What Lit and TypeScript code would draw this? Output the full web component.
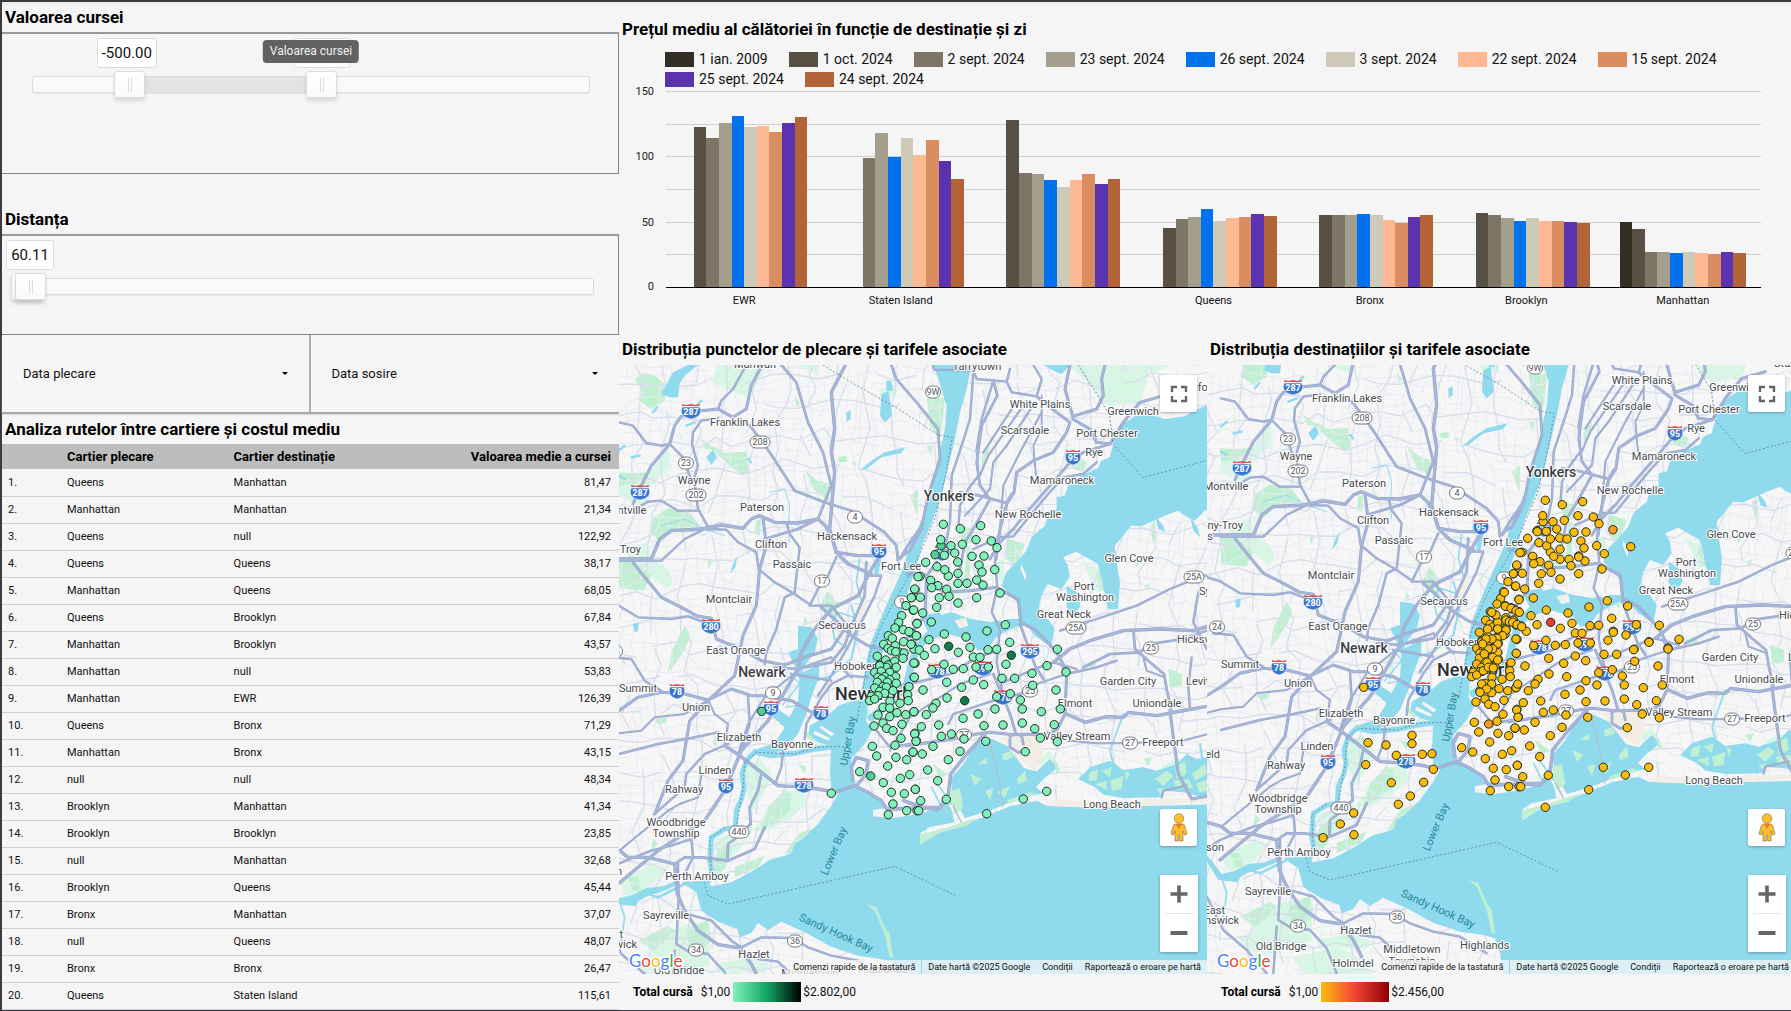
import { LitElement, html, svg, css } from "lit";
import { customElement, property } from "lit/decorators.js";

/* ---------- table and chart data ---------- */

const ROUTES: [string, string, string][] = [
  ["Queens", "Manhattan", "81,47"],
  ["Manhattan", "Manhattan", "21,34"],
  ["Queens", "null", "122,92"],
  ["Queens", "Queens", "38,17"],
  ["Manhattan", "Queens", "68,05"],
  ["Queens", "Brooklyn", "67,84"],
  ["Manhattan", "Brooklyn", "43,57"],
  ["Manhattan", "null", "53,83"],
  ["Manhattan", "EWR", "126,39"],
  ["Queens", "Bronx", "71,29"],
  ["Manhattan", "Bronx", "43,15"],
  ["null", "null", "48,34"],
  ["Brooklyn", "Manhattan", "41,34"],
  ["Brooklyn", "Brooklyn", "23,85"],
  ["null", "Manhattan", "32,68"],
  ["Brooklyn", "Queens", "45,44"],
  ["Bronx", "Manhattan", "37,07"],
  ["null", "Queens", "48,07"],
  ["Bronx", "Bronx", "26,47"],
  ["Queens", "Staten Island", "115,61"],
];

const SERIES: [string, string][] = [
  ["1 ian. 2009", "#322e24"],
  ["1 oct. 2024", "#575043"],
  ["2 sept. 2024", "#7d7667"],
  ["23 sept. 2024", "#a49e8c"],
  ["26 sept. 2024", "#0072f0"],
  ["3 sept. 2024", "#cfc9b7"],
  ["22 sept. 2024", "#ffb992"],
  ["15 sept. 2024", "#d98d61"],
  ["25 sept. 2024", "#5c33ae"],
  ["24 sept. 2024", "#b26438"],
];

const GROUPS: [string, number[]][] = [
  ["EWR", [0, 122.7, 114.3, 125.8, 131.1, 122.7, 123.5, 118.9, 125.8, 130.4]],
  ["Staten Island", [0, 0, 99, 118.1, 99.7, 114.3, 101.3, 112.8, 96.7, 82.9]],
  ["", [0, 128.1, 87.5, 86.7, 82.1, 76.8, 82.1, 86.7, 79.1, 82.9]],
  ["Queens", [0, 45.4, 52.3, 53.8, 59.9, 50.2, 53.1, 53.8, 56.1, 54.6]],
  ["Bronx", [0, 55.4, 55.4, 55.4, 56.1, 55.4, 51.5, 49.2, 53.8, 55.4]],
  ["Brooklyn", [0, 56.9, 55.4, 53.1, 50.8, 53.1, 50.8, 50.8, 50, 49.2]],
  ["Manhattan", [50, 44.6, 27, 27, 26.3, 27, 26.3, 25.5, 27, 26.3]],
];

/* ---------- map data: every sheet has an origin, in thirds of a pixel ---------- */

type Sheet = [number, number];
const NW: Sheet = [0, 0];
const NE: Sheet = [876, 0];
const SW: Sheet = [0, 1005];
const SE: Sheet = [876, 1005];
const XW: Sheet = [-45, 1077];
const XN: Sheet = [813, 72];
const XS: Sheet = [813, 1077];

const WATER: [Sheet, string][] = [
  [NW, "M190,1660 235,1690 250,1745 300,1778 358,1800 365,1825 400,1812 420,1782 450,1803 490,1778 560,1810 640,1853 720,1880 790,1890 825,1900 840,1945 850,2010 1830,2010 1830,1425 1616,1430 1416,1435 1326,1432 1286,1430 1256,1415 1176,1432 1106,1460 1026,1490 956,1515 906,1547 908,1512 936,1494 1010,1480 1000,1440 985,1420 966,1435 906,1455 820,1468 765,1462 765,1443 800,1438 775,1405 720,1372 700,1345 700,1290 740,1245 762,1205 745,1175 750,1120 735,1110 690,1120 662,1130 640,1150 610,1170 575,1190 572,1215 600,1240 640,1250 636,1330 640,1380 665,1385 640,1430 600,1485 560,1525 530,1545 520,1572 500,1580 460,1590 400,1628 340,1660 280,1672 260,1655Z"],
  [NW, "M946,108 961,150 986,230 981,300 961,390 941,470 916,560 876,650 850,730 800,840 755,950 738,1040 725,1125 748,1125 765,1050 790,980 850,850 886,740 916,640 946,570 971,500 991,410 1011,330 1026,250 1046,180 1060,108Z"],
  [NW, "M1830,225 1776,225 1740,240 1700,262 1640,270 1590,255 1550,262 1515,285 1490,330 1475,385 1450,395 1440,418 1390,440 1350,470 1340,500 1316,505 1316,540 1290,560 1280,590 1240,625 1225,665 1190,705 1165,730 1150,770 1180,800 1205,830 1205,870 1150,870 1120,880 1060,870 1000,850 960,860 930,900 920,940 990,915 1060,935 1080,965 1110,960 1130,930 1150,915 1200,890 1230,890 1250,920 1300,955 1310,900 1290,870 1262,840 1270,800 1290,765 1330,780 1355,745 1350,710 1335,685 1375,668 1440,705 1450,745 1470,840 1500,840 1506,760 1496,700 1490,650 1540,590 1570,592 1640,560 1680,545 1700,560 1730,575 1760,545 1830,530Z"],
  [NE, "M470,770 500,790 512,830 490,860 470,835Z M735,560 760,590 765,610 745,600Z M840,560 865,600 870,625 850,605Z M30,860 90,850 110,900 60,920Z"],
  [SE, "M190,250 240,222 290,245 340,312 380,322 420,285 442,312 400,345 378,370 400,388 330,402 240,440 165,462 128,400 122,345 160,300Z"],
  [SE, "M505,345 540,310 600,290 640,318 700,310 740,320 800,300 830,270 860,285 950,270 950,385 870,398 820,385 760,380 750,400 640,402 580,392 555,370Z"],
  [SW, "M545,30 605,0 603,40 580,100 565,150 540,210 500,255 470,268 415,268 418,255 470,238 500,190 455,150 470,130 515,160 540,110Z"],
  [NW, "M540,890 580,895 600,930 590,970 560,1010 545,1050 530,1010 510,970 540,960Z M130,195 165,130 210,108 240,108 200,140 185,165 180,205 155,205Z M790,195 812,185 822,260 800,280 786,260Z M265,385 285,362 297,385 280,408Z M805,155 820,155 825,185 805,185Z M685,250 698,243 698,270 686,280Z M725,425 760,395 800,370 862,355 850,372 790,385 745,420Z M345,705 358,682 352,715 335,735Z M775,690 790,690 780,740 768,735Z M45,885 62,880 60,905 50,910Z"],
  [NE, "M400,108 480,108 455,135 430,125Z M455,500 475,500 465,520Z"],
  [XW, "M90,620 130,600 180,595 215,580 222,592 180,610 110,632 98,655 40,648 10,600 0,580 8,575 50,630Z"],
];

const RIVERS: [Sheet, string, number][] = [
  [SW, "M415,265 460,275 530,268 590,255 645,248", 16],
  [SW, "M412,262 385,290 372,330 378,370 372,400 355,440 352,490 320,495 280,520 275,590 283,630 265,662", 15],
  [NW, "M930,920 895,960 880,1010 865,1070 820,1120 760,1165", 22],
  [NW, "M725,690 715,760 735,830 725,870 660,850 640,880 650,930 690,960", 5],
  [NW, "M700,830 720,900 700,990 640,1040 580,1060", 6],
  [NW, "M455,490 500,480 515,530 510,600 515,640", 3],
  [SW, "M210,655 120,700 90,690 40,720 5,715", 7],
  [SW, "M5,715 20,760 10,830", 5],
  [SE, "M640,150 625,190 600,260 610,300", 5],
  [SE, "M350,345 400,330 440,300 M880,300 870,240", 6],
  [SE, "M100,440 65,370 M125,420 75,350", 5],
  [NE, "M165,540 180,560 M560,540 510,600", 3],
  [NW, "M130,590 200,570 260,600 320,620", 3],
  [SW, "M515,25 545,60 480,140 M560,120 500,130", 4],
  [NW, "M3,365 20,350 M40,385 65,380 M105,250 118,235 M230,235 250,215 M205,290 230,280 M390,390 400,400 M3,440 20,450", 7],
];

const ISLANDS = "M1010,875 1045,870 1050,890 1025,898Z M1130,870 1165,865 1170,885Z M1210,705 1225,740 1222,755 1208,720Z M650,1215 610,1190 605,1196 640,1222Z M590,1205 636,1228 632,1235 585,1215Z M460,1110 520,1145 512,1160 452,1122Z";

const PARKS: [Sheet, string][] = [
  [NW, "M50,150 75,132 110,138 146,172 140,215 100,240 82,228 60,212 75,190Z M100,570 150,538 215,552 245,590 215,605 160,610 130,640 95,610Z M3,692 55,705 100,740 78,785 3,778Z M270,348 300,358 320,372 385,368 390,430 372,440 330,405Z M560,422 598,455 635,465 632,515 590,485Z M160,970 200,890 218,920 200,960 175,1000 150,1030Z M628,785 660,825 655,870 605,835Z M660,385 685,380 688,398 662,400Z M250,330 270,340 285,362 262,360Z M700,400 715,400 712,415Z M270,690 285,695 270,720Z M530,205 545,220 538,235Z M415,575 430,570 425,620 410,615Z M0,430 45,432 100,430 60,460 3,470Z M560,860 570,880 555,885Z"],
  [NE, "M50,205 105,208 98,280 88,330 60,290Z M150,592 185,598 190,640 155,650Z M290,628 345,645 320,712 282,685Z M170,650 185,655 178,760 162,760Z M470,395 500,380 530,400 520,430 490,420Z M90,108 120,108 115,118Z M560,720 590,745 590,790 568,780Z M720,590 735,580 740,620 728,640Z M670,690 690,700 680,715Z M0,500 25,480 22,560Z M300,890 330,880 320,910Z M215,380 240,350 235,390 215,420Z M50,350 70,350 62,380Z M510,1010 560,990 555,1015Z M700,770 720,762 715,785Z"],
  [SW, "M380,320 395,340 378,345Z M450,430 500,378 520,395 515,440 470,480 430,495Z M300,560 330,540 340,560 322,612 292,640 280,610Z M500,570 540,510 590,490 600,492 545,560Z M350,610 400,590 440,575 420,610 350,640Z M210,800 270,765 280,830 245,858 210,850Z M60,830 150,785 170,800 110,860Z M30,640 60,640 70,680 45,680Z M110,165 150,160 140,178 120,180Z M290,215 302,220 295,248 285,240Z M540,300 565,308 560,330Z M735,150 757,135 750,160Z M105,520 120,540 100,560Z M550,205 640,200 650,222 580,232Z"],
  [SE, "M120,380 150,373 160,432 132,450Z M30,512 100,495 180,468 200,462 170,485 80,508 30,542Z M205,300 230,280 232,300Z M275,270 300,262 310,280 280,290Z M320,345 345,320 350,350 325,360Z M180,330 215,345 195,365Z M262,385 300,365 285,400Z M225,380 250,372 240,410Z M290,410 360,385 380,392 300,418Z M775,15 815,30 815,65 780,70Z M70,300 110,330 88,345Z M700,285 725,280 715,305Z M430,280 450,320 440,330Z M780,225 812,232 800,240Z"],
  [NW, "M1410,1340 1440,1325 1435,1350Z"],
  [SW, "M745,720 775,730 800,790 815,810 825,880 815,880 800,810 770,740Z"],
  [SE, "M540,325 565,315 560,350 535,350Z M575,320 605,310 600,340Z M600,350 640,335 635,375 605,380Z M555,360 590,350 590,378Z M645,320 660,330 648,350Z M735,345 770,320 790,335 760,365Z M795,310 825,290 830,330 800,345Z M790,350 835,345 850,372 800,375Z M845,330 885,300 890,330 855,350Z M860,358 900,345 900,380 868,385Z M738,375 765,372 760,395Z"],
];

const PALE: [Sheet, string][] = [
  [NW, "M300,108 445,108 428,150 385,205 280,160Z M3,440 90,435 135,378 152,350 155,420 100,470 90,520 60,530 3,500Z M20,660 90,640 100,690 150,720 165,760 150,780 100,745 40,700Z M780,180 840,170 835,200 790,200Z M540,108 600,108 600,140Z"],
  [NE, "M470,108 585,108 720,108 710,160 690,215 640,225 600,232 575,215 545,170 510,140Z M660,108 780,108 740,130Z M520,700 560,720 600,780 560,790Z M260,700 280,690 285,760 262,750Z M100,770 160,740 180,790 120,800Z M690,250 740,240 720,260Z"],
  [SW, "M385,300 430,290 462,330 432,400 400,440 395,500 370,540 330,510 290,525 300,580 290,630 320,600 360,560 420,480 500,380 555,380 565,420 520,460 450,500 400,500 395,400 375,370Z M90,850 175,790 270,770 276,850 200,880 180,910 120,890Z M5,650 100,602 145,612 75,690 20,690Z M580,240 640,235 640,250 590,252Z M290,900 400,880 430,925 300,925Z M500,60 520,55 510,110Z"],
  [SE, "M380,290 420,260 430,285 400,310Z M150,50 190,40 190,60Z M270,300 330,310 300,340Z M580,340 620,300 640,320 620,360Z M740,320 800,280 850,300 800,360Z"],
  [XW, "M100,820 240,760 320,760 320,830 200,870 130,860Z M260,880 400,850 460,880 500,930 300,930Z M400,800 500,830 480,860Z"],
];

const SAND: [Sheet, string][] = [
  [SE, "M270,222 390,205 400,260 378,320 345,300 310,262Z M410,425 440,408 520,412 640,412 760,405 890,402 950,395 950,405 890,412 760,420 640,432 500,430Z"],
  [NW, "M730,820 745,810 745,860 720,900 715,870Z M670,920 690,915 685,955Z"],
  [NE, "M155,820 170,828 165,850 150,840Z M262,120 280,108 275,135Z M132,875 170,865 160,895Z"],
];

const ROADS: [Sheet, string, number][] = [
  [NW, "M3,280 L45,290 85,342 130,350 155,345 195,385 215,440 230,470", 6],
  [NW, "M45,525 L65,480 100,410 155,345 170,290 190,262 250,245 300,240 345,265 385,240 400,170 432,108", 8],
  [NW, "M300,240 L310,215 345,180 385,108", 6],
  [NW, "M300,268 L250,275 225,310 222,345 240,410 228,450 240,540 268,590", 6],
  [NW, "M60,535 L90,518 130,515 180,545 245,545", 6],
  [NW, "M-45,690 L3,690 100,690 125,630 160,605 250,600 310,588 375,598 400,570 425,560 470,580 540,582 600,570 622,590 640,620 655,670 720,680 780,680", 9],
  [NW, "M3,695 L130,695 200,630 260,600 325,602 360,640 415,670 422,720 470,760 530,795 580,830 640,830 680,880", 6],
  [NW, "M45,700 L80,745 130,805 180,830 240,862 280,868 295,930 370,960 430,995 500,1008 560,985 640,960 680,900", 8],
  [NW, "M-45,815 L3,830 60,865 160,870 210,862 260,880", 6],
  [NW, "M375,275 L400,295 455,370 530,485 620,520 700,545 800,610 835,650 840,695", 7],
  [NW, "M490,108 L535,160 570,280 615,370 640,470 620,520 600,570 540,600 440,630", 7],
  [NW, "M682,108 L640,190 650,300 640,370 650,430 635,600 655,670 690,705 760,735", 9],
  [NW, "M820,108 L835,150 900,225 960,300 966,390 930,500 910,600 876,665 840,690", 7],
  [NW, "M435,565 L445,650 425,720 415,830 375,920 350,1040 270,1115 215,1175 195,1295 150,1355 110,1455", 8],
  [NW, "M505,580 L515,615 545,655 530,790 500,805 475,900 445,970 440,1005", 6],
  [NW, "M655,685 L630,740 600,780 575,830", 6],
  [NW, "M610,835 L660,880 700,920 750,950 790,960", 8],
  [NW, "M785,680 L750,740 720,800 640,840 590,900 550,970 540,1020 450,1175 370,1265 320,1385 260,1475 120,1565 0,1665", 9],
  [NW, "M750,740 L790,740 770,800 740,860 680,970 640,1040 600,1100", 6],
  [NW, "M745,700 L740,800 700,890 680,950 640,1000 560,1015", 7],
  [NE, "M-30,690 L0,640 30,600", 8],
  [NE, "M68,108 L72,122 190,125 200,150 290,158 300,120", 6],
  [NE, "M190,130 L180,270 155,350 125,440 120,580 100,680", 6],
  [NE, "M250,155 L215,270 200,360 205,440 175,480 150,530 145,600", 6],
  [NE, "M250,155 L262,200 215,290 200,400 210,470 240,510 190,600 165,640 150,720", 7],
  [NE, "M290,158 L305,190 380,202 395,150 370,108", 6],
  [NE, "M380,202 L440,250 480,280 470,310 430,370 370,395 320,430 312,490 290,525 270,600 258,690", 8],
  [NE, "M480,108 L465,180 488,262 560,240 580,200 575,150 585,108", 8],
  [NE, "M488,270 L540,300 560,340 600,345 640,280 690,220 760,200", 8],
  [NE, "M600,345 L520,370 480,400 420,470 350,550 310,600 270,640 240,690", 7],
  [NE, "M560,400 L520,435 460,445 410,500 360,560 310,622 270,625 190,660", 6],
  [NE, "M375,220 L290,350 250,400 240,480 165,560", 5],
  [NE, "M345,222 L235,380 205,450", 5],
  [NE, "M315,225 L220,370", 5],
  [NE, "M150,490 L210,500 290,522 305,495", 7],
  [NE, "M395,200 L395,300 370,350 378,440", 4],
  [NE, "M395,250 L330,370 280,470 270,600", 5],
  [NE, "M-10,735 L40,735 100,790 180,785 260,775 325,812 332,880 380,905 440,970 470,1025", 8],
  [NE, "M265,620 L255,700 262,775 245,850 270,900 260,1000 280,1100", 6],
  [NE, "M330,885 L350,940 375,1010 400,1050", 7],
  [NE, "M-10,930 L45,860 50,740 80,700", 8],
  [NE, "M430,1000 L480,960 540,935 640,905 750,900 850,905 930,880", 9],
  [NE, "M450,905 L560,870 680,830 780,780 880,740 930,735", 6],
  [NE, "M520,1015 L600,975 690,970 720,945 820,930 930,890", 7],
  [NE, "M670,905 L675,960 720,1000 762,1035 770,1080 785,1150", 7],
  [NE, "M865,790 L850,880 890,960", 6],
  [NE, "M280,1060 L400,1010 430,1000 500,1020", 6],
  [SW, "M-45,170 L3,140 60,100 130,85 200,90 270,108 340,75 400,95 440,95 520,110 590,150 620,155", 8],
  [SW, "M-20,-20 L40,-15 80,50 130,80", 6],
  [SW, "M3,270 L120,240 220,222 300,205", 6],
  [SW, "M-45,220 L3,208 70,200 110,160 200,150 270,108", 5],
  [SW, "M270,108 L290,150 330,180 320,240", 5],
  [SW, "M540,20 L440,100 390,180 360,270", 5],
  [SW, "M390,95 L395,180 370,262", 6],
  [SW, "M320,245 L365,275 430,325 480,365 530,368 600,375 650,385 710,365 750,385 790,410 806,435 900,432 960,435 980,415", 9],
  [SW, "M705,350 L700,310 715,280 750,290 745,330 720,360", 9],
  [SW, "M430,330 L420,380 395,430 398,480 350,525 330,540 328,590", 7],
  [SW, "M440,490 L410,555 330,590 250,580 200,580 170,600", 7],
  [SW, "M-45,545 L5,560 30,580 90,580 170,600 178,690 200,740 240,800 300,842 365,852 400,900 425,950", 9],
  [SW, "M180,600 L182,700 175,840 210,862 270,870 320,925 350,1000", 6],
  [SW, "M215,752 L280,770 340,830 370,850 430,820 520,822 570,850 640,875 720,890 800,940", 6],
  [SW, "M495,260 L490,310 475,350", 6],
  [SW, "M560,225 L565,180 610,100 640,60 690,35 750,40", 6],
  [SW, "M110,450 L200,370 205,330 260,270 330,240", 6],
  [SW, "M-45,630 L0,600 100,560 160,545 220,525 225,580 215,600 205,620", 6],
  [SW, "M10,555 L150,440 185,420 240,400 250,330", 5],
  [SW, "M420,885 L480,893 530,940", 6],
  [SW, "M-45,760 L10,870 80,930 140,1000", 6],
  [SW, "M170,860 L160,1000", 6],
  [SW, "M520,30 L640,50 M470,10 540,15 640,-20 700,40", 6],
  [SE, "M-10,245 L110,228 200,210 240,205 310,212 400,210 440,200 465,150 470,30 455,0", 8],
  [SE, "M225,210 L170,270 122,330 115,390 90,430 40,430 -20,410", 9],
  [SE, "M470,150 L525,175 590,158 640,160 655,145 740,155 830,138 930,120", 9],
  [SE, "M250,30 L275,90 300,150 318,210 300,215 300,250 325,265 345,262 M318,210 335,215 340,240", 7],
  [SE, "M780,140 L790,220 805,330 845,405 930,390", 8],
  [SE, "M755,400 L760,380 830,365", 6],
  [SE, "M115,180 L130,150 250,110 330,90 380,60 470,30 560,10 620,-10", 6],
  [SE, "M480,230 L560,238 640,238 720,235 800,235 930,200", 5],
  [SE, "M-80,70 L0,60 120,30 200,-20 260,-40", 7],
  [SE, "M-60,260 L0,160 60,120 150,60 240,30", 5],
  [SE, "M845,-20 L835,70 840,135", 6],
  [SE, "M-100,200 L-60,250 0,240", 6],
  [SE, "M700,-20 L710,20 765,40", 5],
];

/* A repeatable pseudo-random stream for the street network. */
function stream(seed: number) {
  let s = seed;
  return () => ((s = (s * 16807) % 2147483647), s / 2147483647);
}

function streets(seed: number, gap: number, step: number, jitter: number, skip: number): string {
  const r = stream(seed);
  const out: string[] = [];
  for (let y = 60; y < 2040; y += gap) {
    let pen = false;
    for (let x = -60; x < 1840; x += step) {
      const py = Math.round(y + (r() - 0.5) * jitter + Math.sin(x / 170 + y / 300) * 22);
      out.push(`${pen ? "L" : "M"}${Math.round(x + (r() - 0.5) * jitter)},${py}`);
      pen = r() > skip;
    }
  }
  for (let x = -60; x < 1840; x += gap) {
    let pen = false;
    for (let y = 60; y < 2040; y += step) {
      const px = Math.round(x + (r() - 0.5) * jitter + Math.sin(y / 190 + x / 260) * 30);
      out.push(`${pen ? "L" : "M"}${px},${Math.round(y + (r() - 0.5) * jitter)}`);
      pen = r() > skip;
    }
  }
  return out.join("");
}
const FINE = streets(77, 33, 42, 26, 0.28);
const MIDDLE = streets(1234, 92, 60, 44, 0.16);

type Label = [Sheet, string, number, number, string?];
const LABELS: Label[] = [
  [NW, "Mahwah", 410, 104],
  [NW, "Franklin Lakes", 380, 280],
  [NW, "Wayne", 228, 454],
  [NW, "Paterson", 432, 535],
  [NW, "Hackensack", 688, 622],
  [NW, "Clifton", 460, 645],
  [NW, "Passaic", 521, 704],
  [NW, "Fort Lee", 848, 712],
  [NW, "Montclair", 333, 811],
  [NW, "Secaucus", 672, 889],
  [NW, "East Orange", 355, 963],
  [NW, "Montville", 17, 543],
  [NW, "Parsippany-Troy", 69, 660, "end"],
  [NW, "Hills", -20, 694, "end"],
  [NE, "Tarrytown", 200, 110],
  [NE, "White Plains", 390, 226],
  [NE, "Scarsdale", 346, 304],
  [NE, "Greenwich", 668, 246],
  [NE, "Port Chester", 590, 313],
  [NE, "Rye", 552, 368],
  [NE, "Mamaroneck", 455, 454],
  [NE, "Yonkers", 116, 501, "city"],
  [NE, "New Rochelle", 353, 555],
  [NE, "Glen Cove", 657, 687],
  [NE, "Port", 523, 771],
  [NE, "Washington", 525, 805],
  [NE, "Great Neck", 461, 856],
  [NE, "Hicksville", 802, 930, "start"],
  [NE, "Syosset", 866, 787, "start"],
  [NE, "Stamford", 786, 173, "start"],
  [SW, "Newark", 433, 25, "city"],
  [SW, "Hoboken", 715, 5],
  [SW, "Summit", 60, 73],
  [SW, "Union", 235, 129],
  [SW, "Elizabeth", 363, 219],
  [SW, "Bayonne", 521, 241],
  [SW, "Linden", 290, 318],
  [SW, "Rahway", 197, 375],
  [SW, "Woodbridge", 173, 473],
  [SW, "Township", 173, 507],
  [SW, "Perth Amboy", 238, 636],
  [SW, "Sayreville", 145, 753],
  [SW, "Hazlet", 407, 869],
  [SW, "Old Bridge", 183, 917],
  [SW, "New York", 652, 86, "metro"],
  [XW, "Edison", 56, 550, "end"],
  [XW, "Plainfield", 46, 270, "end"],
  [XW, "East", 60, 737, "end"],
  [XW, "Brunswick", 103, 769, "end"],
  [XW, "Middletown", 620, 856],
  [XW, "Township", 620, 890],
  [XW, "Highlands", 765, 843, "start"],
  [XW, "Holmdel", 445, 897],
  [SE, "Garden City", 654, 52],
  [SE, "Levittown", 828, 52, "start"],
  [SE, "Elmont", 495, 118],
  [SE, "Uniondale", 741, 118],
  [SE, "Valley Stream", 500, 217],
  [SE, "Freeport", 760, 234],
  [SE, "Long Beach", 607, 419],
];

const BAYS: [string, number, number, number][] = [
  ["Upper Bay", 690, 1237, -80],
  ["Lower Bay", 647, 1567, -67],
  ["Sandy Hook Bay", 653, 1812, 24],
];

const OVALS: [Sheet, string, number, number][] = [
  [NW, "208", 427, 338], [NW, "23", 203, 403], [NW, "202", 235, 499], [NW, "4", 711, 563],
  [NW, "17", 611, 757], [NW, "9", 852, 818], [NE, "9W", 68, 188], [NE, "25A", 851, 743],
  [NE, "25A", 499, 898], [NE, "25", 723, 957], [SW, "9", 465, 87], [SW, "440", 362, 505],
  [SW, "36", 530, 831], [SW, "34", 234, 859], [SE, "27", 659, 236], [SE, "27", 163, 212],
  [SE, "25", 360, 82], [NW, "24", -10, 967],
];

const SHIELDS: [Sheet, string, number, number][] = [
  [NW, "287", 219, 247], [NW, "287", 65, 490], [NW, "95", 783, 667], [NW, "280", 279, 890],
  [NE, "95", 489, 384], [NE, "95", 95, 672], [NE, "295", 361, 965], [SW, "78", 176, 82],
  [SW, "95", 458, 132], [SW, "78", 610, 147], [SW, "95", 323, 367], [SW, "278", 557, 362],
  [SE, "278", 82, 20], [SE, "495", 220, 13], [SE, "678", 280, 98],
];

/* Trip points: x,y pairs; the third number picks the tone. */
type Dot = [number, number, number];
function dots([ox, oy]: Sheet, list: string): Dot[] {
  return list.trim().split(/\s+/).map((p) => {
    const [x, y, t] = p.split(",").map(Number);
    return [(ox + x) / 3, (oy + y) / 3, t || 0] as Dot;
  });
}

const TRIPS: Dot[] = [
  ...dots(NE, `93,650,1 100,586 151,599 212,590 92,632 198,632 123,650 157,646 244,636 261,656 75,677,1 103,679 134,672 186,682
    222,681 47,700 143,699 81,713 115,741 104,722 207,708 216,729 254,722 30,742 144,733 62,754 144,763 171,763
    219,768 200,753 84,770 65,776 15,782 110,781 270,792 5,806 31,805 88,806 117,802 200,806 144,822 80,835 10,844
    38,852 21,883 64,879 286,887 231,906 103,915 168,924 57,932 5,912 20,920 299,940 234,962 260,961 442,961 75,959
    180,955 116,952,2 145,970 304,979,3 5,945 12,960 28,963 43,979 190,984 210,985 288,1006 411,1010 102,1006 15,1003
    65,1022 198,1014 235,1014 160,1019 130,1021`),
  ...dots(NW, `900,743 890,780 880,806 864,830 887,843 851,860 842,880 831,897 897,884 856,902 873,908 811,920 823,928
    895,920 857,938 879,946 797,946 832,950 810,958 820,965 845,970 858,972 833,968 778,982 803,993 830,997 855,988
    888,1002 785,1008 810,1008`),
  ...dots(SW, `805,10 835,10 785,5 770,25 790,22 815,25 780,40 800,38 833,38 791,45 815,47 778,55 808,55 835,58 795,68
    770,72 805,70 825,80 785,82 800,88 780,95 760,97 755,110 770,105 816,112 846,118 873,68 869,92 871,110 795,130
    815,132 780,153 815,158 837,146 863,152 888,143 768,186 795,177 806,193 825,200 852,181 849,223 831,244 891,208
    895,230 763,247 776,276 834,280 885,265 866,287 809,306 725,323 758,336,1 847,343 875,332 796,356 820,385 859,389
    892,376 640,388 825,420 866,440 811,452 897,440 889,40 431,142,1`),
  ...dots(SE, `13,40 39,78 110,55 155,70 190,48 221,62 276,43 314,43 366,28 368,64 468,24 438,78 111,102 78,118 69,132
    49,152 164,110,3 260,98 301,89 331,108 337,135 255,135 394,143 451,135 12,143 204,150 159,163 34,188 86,183
    222,185 279,183 337,177 374,194 433,182 94,217 124,210 162,225 227,232 391,222 442,233 14,210 18,232 69,247
    37,270 9,264 150,262 346,263 115,287 53,318 83,350 16,376 32,410 109,406 26,440 340,405 410,382 230,449`),
];

const DROPS: Dot[] = [
  ...TRIPS.map(([x, y, t]) => [x, y, t === 2 ? 2 : 0] as Dot),
  ...dots(XN, `366,602,1 419,653 340,674 228,630 178,630 240,710 188,682 139,608 263,684 410,831 405,918 367,910 436,887
    564,931 531,960 474,940 428,962 43,832 60,838 75,845 85,850 45,873 55,878 65,880 78,887 92,893 40,790 20,880
    20,900 45,903 35,920 18,928 20,945 20,970 5,960 5,985 20,993 3,930 15,858 2,850 -10,900 -15,930 -8,960 -20,975
    -12,1000 -25,945`),
  ...dots(XW, `489,236 543,243 621,214 621,239 574,274 652,271 681,269 482,302 559,356 656,355 616,396 580,421 446,447
    406,480 354,521 447,512 851,180,1 830,60 845,75 825,85 835,20 850,10 865,12`),
  ...dots(XS, `337,310 163,430 285,50 80,60`),
];

@customElement("city-map")
class CityMap extends LitElement {
  @property({ type: Array }) points: Dot[] = [];
  @property({ type: Array }) tones: string[] = [];
  @property({ type: Number }) shiftX = 0;
  @property({ type: Number }) shiftY = 0;
  @property() name = "";

  static styles = css`
    :host { display: block; position: relative; overflow: hidden; background: #f6f6f7; font-family: Roboto, sans-serif; }
    .canvas { position: absolute; inset: 0; width: 100%; height: 100%; display: block; }
    .town { font: 400 11px Roboto, sans-serif; fill: #46494d; stroke: #fff; stroke-width: 2px; paint-order: stroke; stroke-linejoin: round; dominant-baseline: central; }
    .city { font-size: 14px; font-weight: 500; fill: #3a3d41; }
    .metro { font-size: 18px; font-weight: 500; fill: #2c2e31; }
    .bay { font: 400 11px Roboto, sans-serif; fill: #268a9c; text-anchor: middle; dominant-baseline: central; }
    .plate { font: 400 9px Roboto, sans-serif; fill: #55585c; text-anchor: middle; dominant-baseline: central; }
    .sign { font: 700 9px Roboto, sans-serif; fill: #fff; text-anchor: middle; dominant-baseline: central; }
    .top { position: absolute; top: 10px; right: 10px; }
    .bottom { position: absolute; right: 9px; bottom: 22px; display: flex; flex-direction: column; align-items: flex-start; gap: 29px; }
    .tool { display: flex; align-items: center; justify-content: center; width: 37px; height: 37px; padding: 0; border: 0; border-radius: 2px; background: #fff; box-shadow: 0 1px 3px rgba(0, 0, 0, 0.3); }
    .zoom { display: flex; flex-direction: column; align-items: center; background: #fff; box-shadow: 0 1px 3px rgba(0, 0, 0, 0.3); }
    .zoom .tool { width: 38px; height: 38px; box-shadow: none; background: none; }
    .rule { width: 29px; height: 1px; background: #e6e6e6; }
    .logo { position: absolute; left: 10px; bottom: 1px; font: 400 17px Lato, sans-serif; line-height: 24px; text-decoration: none; -webkit-text-stroke: 3px #fff; paint-order: stroke; }
    .b { color: #4285f4; } .r { color: #ea4335; } .y { color: #fbbc04; } .g { color: #34a853; }
    .credits { position: absolute; right: 0; bottom: 0; display: flex; gap: 1px; font-size: 9px; line-height: 14px; }
    .credit { padding: 0 6px; border: 0; background: rgba(245, 245, 245, 0.75); color: #111; font: inherit; text-decoration: none; white-space: nowrap; }
    .joined { margin-left: -1px; }
  `;

  private sheets(list: [Sheet, string][], fill: string) {
    return list.map(([[x, y], d]) => svg`<path transform="translate(${x} ${y})" d=${d} fill=${fill} />`);
  }

  private lines(list: [Sheet, string, number][], stroke: string, extra: number) {
    return list.map(
      ([[x, y], d, w]) =>
        svg`<path transform="translate(${x} ${y})" d=${d} fill="none" stroke=${stroke} stroke-width=${w + extra} stroke-linejoin="round" stroke-linecap="round" />`
    );
  }

  private labels() {
    return LABELS.map(([[ox, oy], text, x, y, kind]) => {
      const anchor = kind === "end" ? "end" : kind === "start" || kind === "metro" ? "start" : "middle";
      return svg`<text class="town ${kind === "city" || kind === "metro" ? kind : ""}" x=${Math.round((ox + x) / 3)} y=${Math.round((oy + y) / 3)} text-anchor=${anchor}>${text}</text>`;
    });
  }

  render() {
    return html`
      <svg class="canvas" role="img" aria-label=${this.name}>
        <g transform="translate(${this.shiftX} ${this.shiftY})">
          <g transform="scale(0.3333333)">
            ${this.sheets(PALE, "#d5f7e3")} ${this.sheets(PARKS, "#c0efd2")}
            <path d=${FINE} fill="none" stroke="#e7ebf2" stroke-width="3" />
            <path d=${MIDDLE} fill="none" stroke="#d8dfeb" stroke-width="4" stroke-linejoin="round" />
            ${this.sheets(WATER, "#90daee")} ${this.lines(RIVERS, "#90daee", 0)}
            <path d=${ISLANDS} fill="#f6f6f7" />
            ${this.sheets(SAND, "#f3eee5")} ${this.sheets(PARKS.slice(3), "#c0efd2")}
            <path d="M1112,1225 L1140,1340 1155,1435 M1005,1430 1030,1480" stroke="#b4bfd3" stroke-width="4" fill="none" />
            ${this.lines(ROADS, "#8fa0c8", 1)} ${this.lines(ROADS, "#a8b6d8", -2)}
            <path
              d="M615,108 L700,160 850,245 960,318 1003,325 985,430 950,570 890,710 800,870 755,975 735,1080 715,1180 M1380,108 L1440,200 1475,260 1485,345 1575,446 1775,392 M690,1252 L600,1254 530,1275 415,1270 380,1300 375,1380 355,1490 M320,1497 275,1530 280,1620 258,1660 270,1700 330,1725 830,1612 876,1634 1012,1699"
              fill="none" stroke="#5c7f94" stroke-opacity="0.8" stroke-width="3" stroke-dasharray="6 6" />
          </g>
          ${OVALS.map(([[ox, oy], t, x, y]) => {
            const cx = Math.round((ox + x) / 3), cy = Math.round((oy + y) / 3), w = t.length > 2 ? 20 : 15;
            return svg`<rect x=${cx - w / 2} y=${cy - 6} width=${w} height="12" rx="6" fill="#fff" stroke="#777b80" /><text class="plate" x=${cx} y=${cy}>${t}</text>`;
          })}
          ${SHIELDS.map(([[ox, oy], t, x, y]) => {
            const cx = Math.round((ox + x) / 3), cy = Math.round((oy + y) / 3), s = t.length > 2 ? 1.25 : 1;
            return svg`<g transform="translate(${cx} ${cy})"><path d=${`M${-7 * s},-4 H${7 * s} C${9 * s},2 ${7 * s},6 0,8 C${-7 * s},6 ${-9 * s},2 ${-7 * s},-4Z`} fill="#3a77cc" stroke="#fff" stroke-width="0.5" /><path d=${`M${-7 * s},-7 L${-4 * s},-6 0,-7 ${4 * s},-6 ${7 * s},-7 V-5 H${-7 * s}Z`} fill="#e0544f" /><text class="sign" x="0" y="1">${t}</text></g>`;
          })}
          ${this.labels()}
          ${BAYS.map(
            ([t, x, y, a]) => svg`<text class="bay" transform="translate(${Math.round(x / 3)} ${Math.round(y / 3)}) rotate(${a})">${t}</text>`
          )}
          ${this.points.map(
            ([x, y, t]) => svg`<circle cx=${x.toFixed(1)} cy=${y.toFixed(1)} r="4.2" fill=${this.tones[t]} stroke="#1d2a22" stroke-width="1" />`
          )}
        </g>
      </svg>

      <button class="tool top" aria-label="Ecran complet">
        <svg width="18" height="18" viewBox="0 0 18 18" fill="none" stroke="#666" stroke-width="2.4"><path d="M2,7 V2 H7 M11,2 H16 V7 M16,11 V16 H11 M7,16 H2 V11" /></svg>
      </button>
      <div class="bottom">
        <button class="tool" aria-label="Street View">
          <svg width="18" height="30" viewBox="0 0 18 30" stroke="#8a7a5a" stroke-width="0.7">
            <path d="M5,12 H13 L14.500,13 17,22 14.500,23 13,19 V29 H9.700 V23 H8.300 V29 H5 V19 L3.500,23 1,22 3.500,13Z" fill="#fdbf2d" />
            <circle cx="9" cy="6.500" r="4.800" fill="#fdbf2d" />
            <path d="M5.500,12 H12.500 L9,17Z" fill="#e5822a" stroke="none" />
          </svg>
        </button>
        <div class="zoom">
          <button class="tool" aria-label="Mărește">
            <svg width="18" height="18" viewBox="0 0 18 18" stroke="#666" stroke-width="3.600"><path d="M0.500,9 H17.500 M9,0.500 V17.500" /></svg>
          </button>
          <span class="rule"></span>
          <button class="tool" aria-label="Micșorează">
            <svg width="18" height="18" viewBox="0 0 18 18" stroke="#666" stroke-width="4"><path d="M0.500,9 H17.500" /></svg>
          </button>
        </div>
      </div>
      <a class="logo" href="#" aria-label="Google"><span class="b">G</span><span class="r">o</span><span class="y">o</span><span class="b">g</span><span class="g">l</span><span class="r">e</span></a>
      <div class="credits">
        <button class="credit">Comenzi rapide de la tastatură</button>
        <span class="credit">Date hartă ©2025 Google</span>
        <a class="credit joined" href="#">Condiții</a>
        <a class="credit joined" href="#">Raportează o eroare pe hartă</a>
      </div>
    `;
  }
}

@customElement("app-root")
class AppRoot extends LitElement {
  static styles = css`
    :host { display: block; overflow: hidden; font-family: Roboto, sans-serif; color: #000; background: #f5f5f5; }
    * { box-sizing: border-box; }
    .page { display: grid; grid-template-columns: 617fr 1172fr; min-height: 100vh; border: 2px solid #3c3b40; border-right: 0; background: linear-gradient(#e9e9e9, #f5f5f5 6px); }
    .left { display: flex; flex-direction: column; min-width: 0; }
    .title { margin: 0; padding-left: 3px; font-size: 17px; line-height: 30px; font-weight: 700; white-space: nowrap; }
    .box { position: relative; border: 1px solid #858585; border-left: 0; border-top: 2px solid #999; }
    .fare { min-height: 142px; margin-bottom: 30px; padding: 4px 28px 0 30px; }
    .distance { min-height: 101px; padding: 4px 24px 0 9px; }
    .slider { position: relative; padding-top: 38px; }
    .track { position: relative; height: 17px; border: 1px solid #dcdcdc; border-radius: 3px; background: #fafafa; box-shadow: 0 1px 1px rgba(0, 0, 0, 0.06); }
    .span { position: absolute; top: 0; bottom: 0; background: #e3e3e3; }
    .range { position: absolute; left: 0; bottom: -5px; width: 100%; height: 27px; margin: 0; appearance: none; background: none; pointer-events: none; }
    .range::-webkit-slider-thumb { appearance: none; width: 31px; height: 27px; border: 1px solid #dcdcdc; border-radius: 3px; pointer-events: auto; box-shadow: 0 3px 4px rgba(0, 0, 0, 0.12);
      background: linear-gradient(#dcdcdc, #dcdcdc) 13px 6px / 1px 14px no-repeat, linear-gradient(#dcdcdc, #dcdcdc) 16px 6px / 1px 14px no-repeat, linear-gradient(#fff, #fafafa); }
    .value { position: absolute; top: 0; height: 30px; padding: 0; border: 1px solid #dcdcdc; border-radius: 3px; background: #fff; color: #111; font: 400 15px Roboto, sans-serif; text-align: center; transform: translateX(-50%); }
    .long { width: 60px; }
    .mid { width: 57px; }
    .short { width: 48px; }
    .tip { position: absolute; top: 2px; transform: translateX(-50%); padding: 0 7px; border-radius: 4px; background: #616161; color: #f2f2f2; font-size: 12px; line-height: 23px; white-space: nowrap; }
    .dates { display: grid; grid-template-columns: 1fr 1fr; border-bottom: 2px solid #a8a8a8; box-shadow: 0 1px 1px #ddd; }
    .date { position: relative; display: flex; align-items: center; height: 77px; }
    .date:first-child { border-right: 2px solid #b0b0b0; }
    .pick { flex: 1; height: 100%; padding: 0 21px; border: 0; background: none; appearance: none; color: #111; font: 400 13px Roboto, sans-serif; }
    .caret { position: absolute; right: 21px; width: 6px; height: 3px; pointer-events: none; }
    .routes { width: 100%; border-collapse: collapse; table-layout: fixed; font-size: 11px; color: #111; }
    .routes th { height: 25px; padding: 0; background: #bdbdbd; color: #000; font-size: 13px; font-weight: 700; text-align: left; }
    .routes td { height: 27px; padding: 0; border-bottom: 1px solid #d0d0d0; }
    .routes .num { width: 65px; padding-left: 6px; }
    .routes .from { width: 27%; }
    .routes .fee { padding-right: 8px; text-align: right; }

    .right { display: flex; flex-direction: column; min-width: 0; }
    .chart { padding: 12px 30px 25px 47px; }
    .chart .title { margin-left: -47px; }
    .legend { display: flex; flex-wrap: wrap; gap: 5px 21px; margin: 8px -20px 0 -1px; padding: 0; list-style: none; font-size: 14px; line-height: 15px; color: #111; }
    .legend li { display: flex; gap: 5px; white-space: nowrap; }
    .swatch { width: 29px; height: 15px; }
    .plot { position: relative; display: flex; height: 197px; margin-top: 4px; border-bottom: 1px solid #000; }
    .grid { position: absolute; inset: 0; display: flex; flex-direction: column; }
    .cell { position: relative; flex: 1; border-top: 1px solid #d0d0d0; }
    .tick { position: absolute; right: 100%; top: -8px; margin-right: 12px; font-size: 11px; line-height: 16px; color: #222; }
    .zero { top: auto; bottom: -8px; }
    .group { position: relative; flex: 1; display: flex; align-items: flex-end; padding: 0 15px; }
    .bar { flex: 1; }
    .names { display: flex; font-size: 11px; line-height: 16px; padding-top: 5px; color: #111; }
    .names span { flex: 1; text-align: center; min-height: 16px; }
    .maps { flex: 1; display: grid; grid-template-columns: 1fr 1fr; margin-right: -4px; }
    .panel { display: flex; flex-direction: column; min-width: 0; }
    .panel city-map { flex: 1; min-height: 400px; }
    .panel .title { line-height: 31px; }
    .scale { display: flex; align-items: center; height: 36px; padding-left: 14px; font-size: 12px; color: #111; }
    .scale b { margin-right: 13px; font-weight: 700; color: #000; }
    .ramp { width: 68px; height: 20px; margin: 0 2px 0 3px; }
    .scale .from { margin-left: -5px; }
    .green { background: linear-gradient(90deg, #82f2bd, #10a663 50%, #000); }
    .fire { background: linear-gradient(90deg, #fbbc0b, #f44336 50%, #8e0000); }
  `;

  render() {
    return html`
      <main class="page">
        <section class="left">
          <h2 class="title">Valoarea cursei</h2>
          <div class="box fare">
            <div class="slider">
              <input class="value long" style="left:17%" aria-label="Valoarea minimă a cursei" value="-500.00" />
              <input class="value mid" style="left:52%" aria-label="Valoarea maximă a cursei" />
              <div class="track"><div class="span" style="left:17%;width:36%"></div></div>
              <input class="range" type="range" min="0" max="1000" value="155" aria-label="Limita minimă a cursei" />
              <input class="range" type="range" min="0" max="1000" value="520" aria-label="Limita maximă a cursei" />
              <span class="tip" role="tooltip" style="left:50%">Valoarea cursei</span>
            </div>
          </div>
          <h2 class="title">Distanța</h2>
          <div class="box distance">
            <div class="slider">
              <input class="value short" style="left:19px" aria-label="Distanța maximă" value="60.11" />
              <div class="track"></div>
              <input class="range" type="range" min="0" max="1000" value="0" aria-label="Limita minimă a distanței" />
              <input class="range" type="range" min="0" max="1000" value="8" aria-label="Limita maximă a distanței" />
            </div>
          </div>
          <div class="dates">
            ${["Data plecare", "Data sosire"].map(
              (t) => html`<div class="date">
                <select class="pick" aria-label=${t}><option>${t}</option></select>
                <svg class="caret" viewBox="0 0 6 3"><path d="M0,0 H6 L3,3Z" /></svg>
              </div>`
            )}
          </div>
          <h2 class="title">Analiza rutelor între cartiere și costul mediu</h2>
          <table class="routes">
            <thead>
              <tr><th class="num"></th><th class="from">Cartier plecare</th><th>Cartier destinație</th><th class="fee">Valoarea medie a cursei</th></tr>
            </thead>
            <tbody>
              ${ROUTES.map(
                ([from, to, fee], i) => html`<tr><td class="num">${i + 1}.</td><td>${from}</td><td>${to}</td><td class="fee">${fee}</td></tr>`
              )}
            </tbody>
          </table>
        </section>

        <section class="right">
          <div class="chart">
            <h2 class="title">Prețul mediu al călătoriei în funcție de destinație și zi</h2>
            <ul class="legend">
              ${SERIES.map(([t, c]) => html`<li><span class="swatch" style="background:${c}"></span>${t}</li>`)}
            </ul>
            <div class="plot">
              <div class="grid">
                ${["150", "", "100", "", "50", ""].map((t) => html`<div class="cell"><span class="tick">${t}</span></div>`)}
                <span class="tick zero">0</span>
              </div>
              ${GROUPS.map(
                ([, values]) => html`<div class="group">
                  ${values.map((v, i) => html`<div class="bar" style="height:${(v / 1.5).toFixed(1)}%;background:${SERIES[i][1]}"></div>`)}
                </div>`
              )}
            </div>
            <div class="names">${GROUPS.map(([name]) => html`<span>${name}</span>`)}</div>
          </div>
          <div class="maps">
            <div class="panel">
              <h2 class="title">Distribuția punctelor de plecare și tarifele asociate</h2>
              <city-map name="Puncte de plecare" .points=${TRIPS} .tones=${["#82f2bd", "#4fcf92", "#0a7f4b", "#0a7f4b"]} .shiftX=${-1} .shiftY=${-36}></city-map>
              <div class="scale"><b>Total cursă</b><span class="from">$1,00</span><span class="ramp green"></span>$2.802,00</div>
            </div>
            <div class="panel">
              <h2 class="title">Distribuția destinațiilor și tarifele asociate</h2>
              <city-map name="Destinații" .points=${DROPS} .tones=${["#fbbc0b", "#fb9a1c", "#ea3a2e"]} .shiftX=${13} .shiftY=${-60}></city-map>
              <div class="scale"><b>Total cursă</b><span class="from">$1,00</span><span class="ramp fire"></span>$2.456,00</div>
            </div>
          </div>
        </section>
      </main>
    `;
  }
}
